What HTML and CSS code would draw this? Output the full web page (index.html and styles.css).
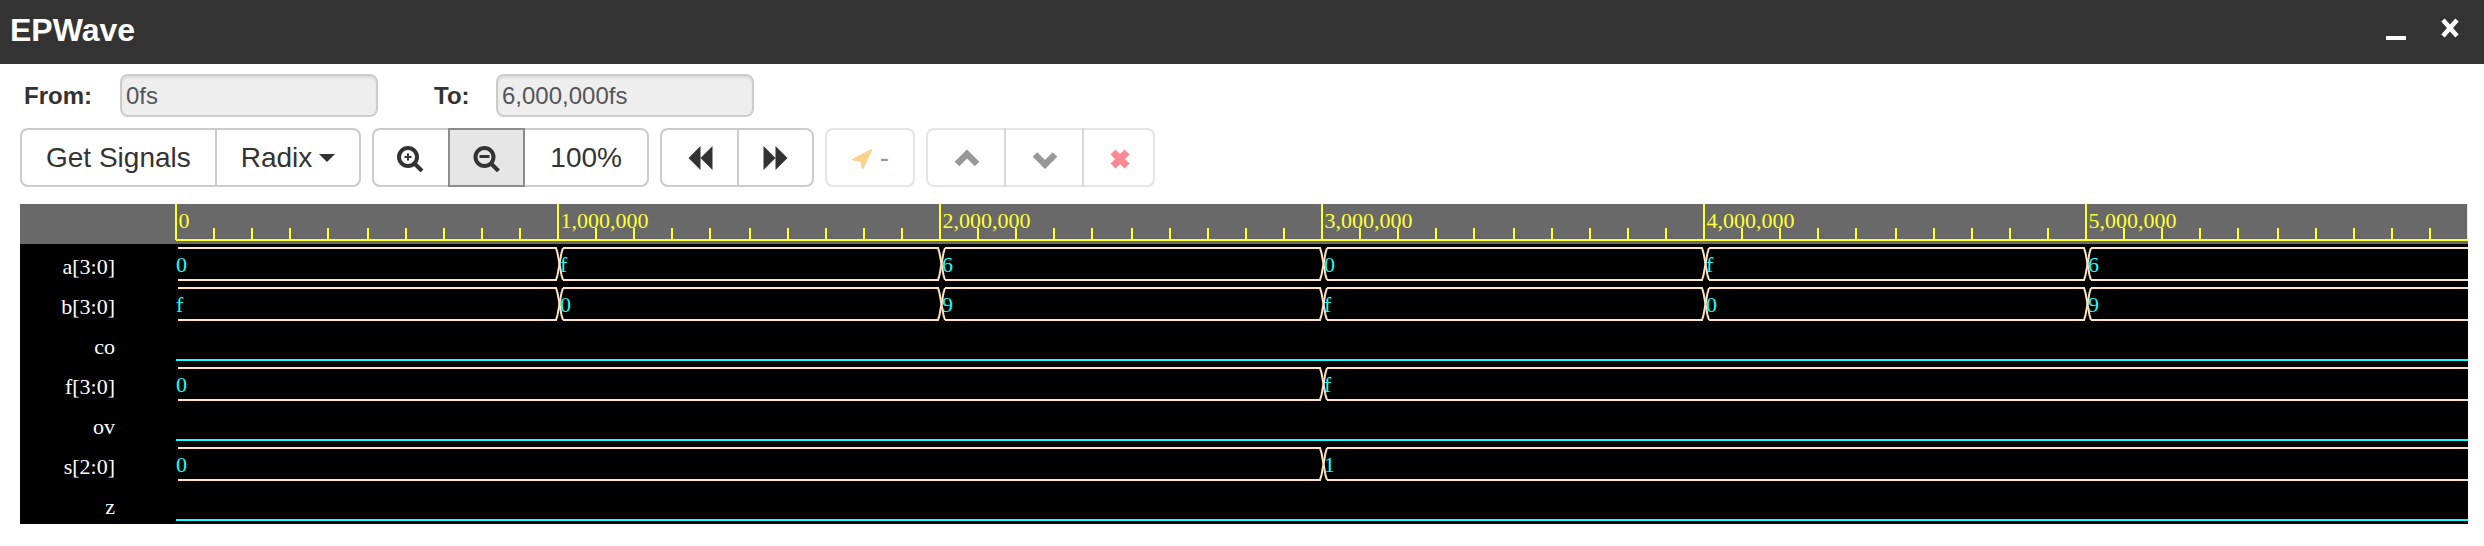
FILE: index.html
```html
<!DOCTYPE html>
<html lang="en">
<head>
  <meta charset="UTF-8">
  <title>EPWave</title>
  <link rel="stylesheet" href="styles.css">
</head>
<body>

<div class="title-bar">
  <span class="title">EPWave</span>
  <div class="window-btns">
    <svg width="20" height="64"><rect x="0" y="36" width="20" height="4" fill="#fff"/></svg>
    <svg width="18" height="64"><path d="M2 20 L16 36 M16 20 L2 36" stroke="#fff" stroke-width="4.5" fill="none"/></svg>
  </div>
</div>

<div class="range-row">
  <label class="from-label">From:</label>
  <input class="range-input" type="text" value="0fs" disabled>
  <label class="to-label">To:</label>
  <input class="range-input" type="text" value="6,000,000fs" disabled>
</div>

<div class="toolbar">
  <div class="btn-group">
    <button class="btn">Get Signals</button>
    <button class="btn">Radix<span class="caret"></span></button>
  </div>

  <div class="btn-group">
    <button class="btn btn-icon w78">
      <svg width="28" height="29" viewBox="0 0 28 29">
        <circle cx="11" cy="14" r="9" class="ico-line" stroke-width="4"/>
        <path d="M7.5 14 H14.5 M11 10.5 V17.5" class="ico-line" stroke-width="2"/>
        <path d="M17.5 20.5 L25 28" class="ico-line" stroke-width="4"/>
      </svg>
    </button>
    <button class="btn btn-icon btn-active w77">
      <svg width="28" height="29" viewBox="0 0 28 29">
        <circle cx="11.5" cy="14" r="9" class="ico-line" stroke-width="4"/>
        <path d="M6.5 13.5 H16.5" class="ico-line" stroke-width="3"/>
        <path d="M18 20.5 L25.5 28" class="ico-line" stroke-width="4"/>
      </svg>
    </button>
    <button class="btn btn-pct">100%</button>
  </div>

  <div class="btn-group">
    <button class="btn btn-icon w79">
      <svg width="28" height="29" viewBox="0 0 28 29">
        <path d="M3.5 15 L15.5 3 V27 Z M15.5 15 L27.5 3 V27 Z" fill="#333"/>
      </svg>
    </button>
    <button class="btn btn-icon w77">
      <svg width="28" height="29" viewBox="0 0 28 29">
        <path d="M2.5 3 L14.5 15 L2.5 27 Z M14.5 3 L26.5 15 L14.5 27 Z" fill="#333"/>
      </svg>
    </button>
  </div>

  <div class="btn-group">
    <button class="btn btn-locate" disabled>
      <svg width="26" height="29" viewBox="0 0 26 29">
        <path d="M24 6 L2.5 17 L12.5 18.5 L14 27 Z" fill="#ffa51f" stroke="#ffa51f" stroke-width="2.5" stroke-linejoin="round"/>
      </svg>
      <span>-</span>
    </button>
  </div>

  <div class="btn-group">
    <button class="btn btn-icon w80" disabled>
      <svg width="28" height="29" viewBox="0 0 28 29">
        <path d="M5 21 L15 11 L25 21" class="ico-line" stroke-width="6.5"/>
      </svg>
    </button>
    <button class="btn btn-icon w80" disabled>
      <svg width="28" height="29" viewBox="0 0 28 29">
        <path d="M5 11.5 L15 21.5 L25 11.5" class="ico-line" stroke-width="6.5"/>
      </svg>
    </button>
    <button class="btn btn-icon w73" disabled>
      <svg width="28" height="29" viewBox="0 0 28 29">
        <path d="M9 9 L23 23 M23 9 L9 23" fill="none" stroke="#ff1529" stroke-width="7"/>
      </svg>
    </button>
  </div>
</div>

<svg class="wave" id="wave" width="2448" height="320" viewBox="0 0 2448 320"></svg>

<script src="wave.js"></script>
</body>
</html>
```

FILE: styles.css
```css
* {
  box-sizing: border-box;
}
body {
  margin: 0;
  background: #fff;
  font-family: "Liberation Sans", Arial, sans-serif;
  color: #333;
  overflow: hidden;
}
.title-bar {
  height: 64px;
  background: #333;
  display: flex;
  justify-content: space-between;
  align-items: center;
  padding: 0 25px 0 10px;
}
.title {
  color: #fff;
  font-size: 32px;
  font-weight: bold;
  line-height: 60px;
  align-self: flex-start;
}
.window-btns {
  display: flex;
  gap: 35px;
}
.range-row {
  display: flex;
  align-items: center;
  margin-top: 10px;
  padding-left: 24px;
  height: 43px;
}
.from-label,
.to-label {
  font-size: 24px;
  font-weight: bold;
}
.from-label {
  width: 96px;
}
.to-label {
  width: 62px;
  margin-left: 56px;
}
.range-input {
  width: 258px;
  height: 43px;
  padding: 0 4px;
  font: 24px "Liberation Sans", Arial, sans-serif;
  color: #555;
  background: #eee;
  border: 2px solid #ccc;
  border-radius: 8px;
  box-shadow: inset 0 2px 2px rgba(0,0,0,0.075);
  opacity: 1;
  -webkit-text-fill-color: #555;
}
.toolbar {
  display: flex;
  gap: 11px;
  margin-top: 11px;
  padding-left: 20px;
}
.btn-group {
  display: flex;
  height: 59px;
}
.btn {
  height: 59px;
  padding: 0 24px;
  display: flex;
  align-items: center;
  font: 28px "Liberation Sans", Arial, sans-serif;
  color: #333;
  background: #fff;
  border: 2px solid #ccc;
  margin-left: -2px;
}
.btn:first-child {
  margin-left: 0;
  border-radius: 8px 0 0 8px;
}
.btn:last-child {
  border-radius: 0 8px 8px 0;
}
.btn:only-child {
  border-radius: 8px;
}
.btn[disabled] {
  opacity: 0.5;
}
.btn-icon {
  padding: 0;
  justify-content: center;
}
.btn-active {
  position: relative;
  background: #e6e6e6;
  border-color: #8c8c8c;
}
.btn-pct {
  padding: 0 25px;
}
.btn-locate {
  width: 90px;
  gap: 7px;
}
.w73 { width: 73px; }
.w77 { width: 77px; }
.w78 { width: 78px; }
.w79 { width: 79px; }
.w80 { width: 80px; }
.ico-line {
  fill: none;
  stroke: #333;
}
.caret {
  margin-left: 7px;
  border-top: 8px solid #333;
  border-left: 8px solid transparent;
  border-right: 8px solid transparent;
}
.wave {
  display: block;
  margin: 17px 0 0 20px;
  background: #000;
  font-family: "Liberation Serif", "Times New Roman", serif;
  font-size: 22px;
}
.ruler-bg {
  fill: #696969;
}
.ruler-line {
  stroke: #ffff33;
  stroke-width: 2;
  fill: none;
  shape-rendering: crispEdges;
}
.ruler-text {
  fill: #ffff33;
}
.sig-name {
  fill: #fff;
  text-anchor: end;
}
.sig-value {
  fill: #1ff;
}
.bus-line {
  stroke: #ffe4c4;
  stroke-width: 2;
  fill: none;
}
.flat-line {
  stroke: #1ff;
  stroke-width: 2;
  shape-rendering: crispEdges;
}
```

FILE: wave.js
```js
const NS = "http://www.w3.org/2000/svg";
const wave = document.getElementById("wave");

const X0 = 156;      // x of time 0
const MAJOR = 382;   // pixels per 1,000,000fs
const ROW = 40;
const FIRST_ROW = 44;

const signals = [
  { name: "a[3:0]", values: ["0", "f", "6", "0", "f", "6"] },
  { name: "b[3:0]", values: ["f", "0", "9", "f", "0", "9"] },
  { name: "co" },
  { name: "f[3:0]", values: ["0", null, null, "f", null, null] },
  { name: "ov" },
  { name: "s[2:0]", values: ["0", null, null, "1", null, null] },
  { name: "z" }
];

function add(tag, cls, attrs, text) {
  const el = document.createElementNS(NS, tag);
  if (cls) el.setAttribute("class", cls);
  for (const k in attrs) el.setAttribute(k, attrs[k]);
  if (text) el.textContent = text;
  wave.appendChild(el);
  return el;
}

function drawRuler() {
  add("rect", "ruler-bg", { x: 0, y: 0, width: 2448, height: 40 });
  let d = `M${X0} 36 H2448`;
  for (let m = 0; m <= 6; m++) {
    const x = X0 + m * MAJOR;
    d += ` M${x} 0 V36`;
    if (m === 6) break;
    for (let t = 1; t < 10; t++) {
      const tx = Math.round((x + 20 + t * 38.2) / 2) * 2 - 20;
      d += ` M${tx} 24 V36`;
    }
  }
  add("path", "ruler-line", { d });
  for (let m = 0; m < 6; m++) {
    const label = (m * 1000000).toLocaleString("en-US");
    add("text", "ruler-text", { x: X0 + m * MAJOR + 2.5, y: 24 }, label);
  }
}

// one bus row, with the little x at each value change
function drawBus(sig, top) {
  const bot = top + 32;
  const mid = top + 16;
  let start = X0 + 2;
  const labels = [];
  sig.values.forEach((val, i) => {
    if (val === null) return;
    const x = X0 + i * MAJOR;
    if (i > 0) {
      add("path", "bus-line", { d: `M${start} ${top} H${x - 2} L${x - 0.5} ${top + 5} L${x + 1.5} ${mid} L${x - 0.5} ${bot - 5} L${x - 2} ${bot} H${start}` });
      add("path", "bus-line", { d: `M${x + 5} ${top} L${x + 3.5} ${top + 5} L${x + 1.5} ${mid} L${x + 3.5} ${bot - 5} L${x + 5} ${bot}` });
      start = x + 5;
    }
    labels.push({ x: i ? x + 2 : x, val });
  });
  add("path", "bus-line", { d: `M${start} ${top} H2448 M${start} ${bot} H2448` });
  // values go on top of the transitions
  labels.forEach(l => add("text", "sig-value", { x: l.x, y: top + 23.5 }, l.val));
}

drawRuler();

signals.forEach((sig, i) => {
  const top = FIRST_ROW + i * ROW;
  add("text", "sig-name", { x: 95, y: top + 26 }, sig.name);
  if (sig.values) drawBus(sig, top);
  else add("line", "flat-line", { x1: X0, y1: top + 32, x2: 2448, y2: top + 32 });
});
```
